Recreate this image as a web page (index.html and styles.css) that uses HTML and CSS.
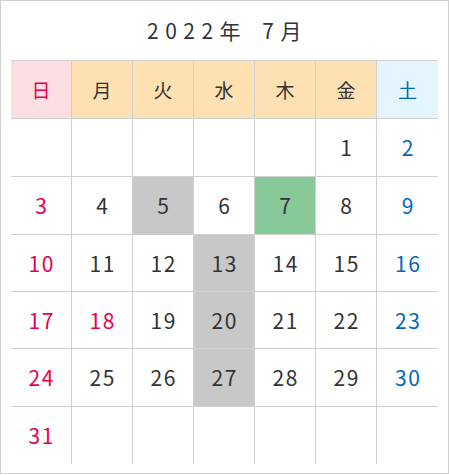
FILE: index.html
```html
<!DOCTYPE html>
<html lang="ja">
<head>
<meta charset="utf-8">
<title>2022年 7月</title>
<link rel="stylesheet" href="styles.css">
</head>
<body>
<div class="frame">
  <h1 class="title">2022年 7月</h1>
  <div class="cal">
    <div class="cell head sun">日</div>
    <div class="cell head wd">月</div>
    <div class="cell head wd">火</div>
    <div class="cell head wd">水</div>
    <div class="cell head wd">木</div>
    <div class="cell head wd">金</div>
    <div class="cell head sat">土</div>

    <div class="cell"></div>
    <div class="cell"></div>
    <div class="cell"></div>
    <div class="cell"></div>
    <div class="cell"></div>
    <div class="cell">1</div>
    <div class="cell sat">2</div>

    <div class="cell sun">3</div>
    <div class="cell">4</div>
    <div class="cell off">5</div>
    <div class="cell">6</div>
    <div class="cell today">7</div>
    <div class="cell">8</div>
    <div class="cell sat">9</div>

    <div class="cell sun">10</div>
    <div class="cell">11</div>
    <div class="cell">12</div>
    <div class="cell off">13</div>
    <div class="cell">14</div>
    <div class="cell">15</div>
    <div class="cell sat">16</div>

    <div class="cell sun">17</div>
    <div class="cell sun">18</div>
    <div class="cell">19</div>
    <div class="cell off">20</div>
    <div class="cell">21</div>
    <div class="cell">22</div>
    <div class="cell sat">23</div>

    <div class="cell sun">24</div>
    <div class="cell">25</div>
    <div class="cell">26</div>
    <div class="cell off">27</div>
    <div class="cell">28</div>
    <div class="cell">29</div>
    <div class="cell sat">30</div>

    <div class="cell sun last">31</div>
    <div class="cell last"></div>
    <div class="cell last"></div>
    <div class="cell last"></div>
    <div class="cell last"></div>
    <div class="cell last"></div>
    <div class="cell last"></div>
  </div>
</div>
</body>
</html>
```

FILE: styles.css
```css
* { box-sizing: border-box; }
html, body { margin: 0; padding: 0; background: #fff; }
body {
  font-family: "Noto Sans CJK JP", "Noto Sans", sans-serif;
  color: #333;
}
.frame {
  width: 449px;
  height: 474px;
  border: 1px solid #cfcfcf;
  padding: 0 10px;
}
.title {
  margin: 0;
  height: 59px;
  display: flex;
  align-items: center;
  justify-content: center;
  font-size: 21px;
  font-weight: 400;
  letter-spacing: 6.5px;
  word-spacing: 4px;
  padding-left: 6px;
  padding-bottom: 2px;
  white-space: pre;
}
.cal {
  display: grid;
  grid-template-columns: repeat(7, 61px);
  grid-template-rows: 59px 58px 58px 57px 57px 58px 57px;
  width: 427px;
}
.cell {
  display: flex;
  align-items: center;
  justify-content: center;
  border-right: 1px solid #d0d0d0;
  border-bottom: 1px solid #d0d0d0;
  font-size: 21px;
  font-weight: 400;
  letter-spacing: 1.5px;
  padding-left: 1.5px;
  padding-bottom: 1px;
}
.cell:nth-child(7n) { border-right: none; }
.cell.last { border-bottom: none; }
.head {
  border-top: 1px solid #d0d0d0;
  font-size: 19px;
  letter-spacing: 0;
  padding-left: 0;
}
.head.sun { background: #fbdde2; }
.head.wd { background: #fde1b2; }
.head.sat { background: #e4f5fd; }
.sun { color: #e6004e; }
.sat { color: #0068b7; }
.off { background: #c8c8c8; }
.today { background: #88c999; }
```
